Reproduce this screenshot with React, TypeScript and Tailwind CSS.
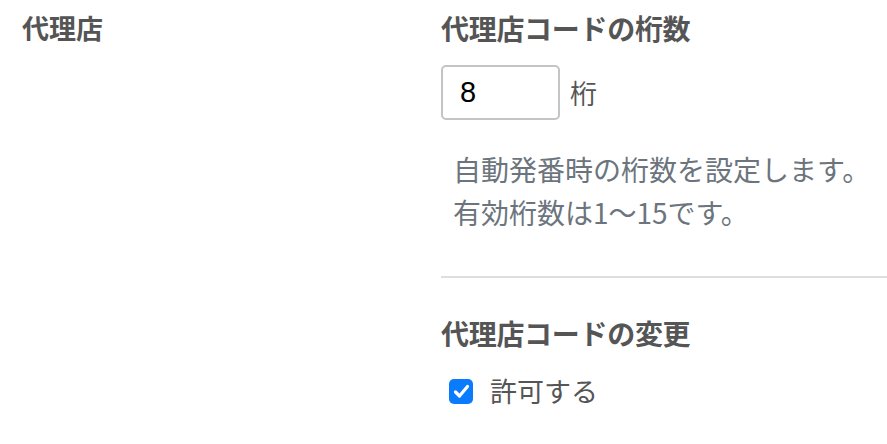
import React, { useState } from 'react';

const App: React.FC = () => {
  const [digits, setDigits] = useState('8');
  const [allowChange, setAllowChange] = useState(true);

  return (
    <div
      className="flex w-full bg-white text-[#555555]"
      style={{ fontFamily: '"Noto Sans CJK JP", "Liberation Sans", sans-serif' }}
    >
      {/* left label column */}
      <div className="w-[441px] shrink-0 pl-[22px] pt-[8px]">
        <h2 className="text-[27px] font-bold leading-[40px]">代理店</h2>
      </div>

      {/* settings column */}
      <div className="flex-1 pt-[8px]">
        <h3 className="text-[28px] font-bold leading-[40px] tracking-[-0.3px]">代理店コードの桁数</h3>

        <div className="mt-[17px] flex items-center">
          <input
            type="text"
            value={digits}
            onChange={(e) => setDigits(e.target.value)}
            className="h-[55px] w-[119px] rounded-[5px] border-2 border-[#c4c4c4] px-[17px] text-[29px] text-black outline-none"
            style={{ fontFamily: '"Liberation Sans", sans-serif' }}
          />
          <span className="ml-[10px] text-[27px] leading-[40px]">桁</span>
        </div>

        <p className="mt-[28px] pl-[12px] text-[28px] leading-[43px] text-[#6c757d]">
          自動発番時の桁数を設定します。
          <br />
          有効桁数は1〜15です。
        </p>

        <div className="mt-[42px] h-[2px] w-full bg-[#dedede]" />

        <h3 className="mt-[35px] text-[28px] font-bold leading-[40px] tracking-[-0.3px]">代理店コードの変更</h3>

        <label className="mt-[18px] flex cursor-pointer items-center pl-[8px]">
          <input
            type="checkbox"
            className="sr-only"
            checked={allowChange}
            onChange={(e) => setAllowChange(e.target.checked)}
          />
          <span
            className={
              allowChange
                ? 'flex h-[25px] w-[24px] items-center justify-center rounded-[5px] bg-[#0b7bfe]'
                : 'flex h-[25px] w-[24px] items-center justify-center rounded-[5px] border-2 border-[#c4c4c4] bg-white'
            }
          >
            {allowChange && (
              <svg width="17" height="15" viewBox="0 0 17 15" fill="none">
                <path d="M2.5 8 L6.5 12 L14.5 2.5" stroke="white" strokeWidth="3.2" strokeLinecap="round" strokeLinejoin="round" />
              </svg>
            )}
          </span>
          <span className="ml-[17px] text-[27px] leading-[40px]">許可する</span>
        </label>
        <div className="h-[24px]" />
      </div>
    </div>
  );
};

export default App;
